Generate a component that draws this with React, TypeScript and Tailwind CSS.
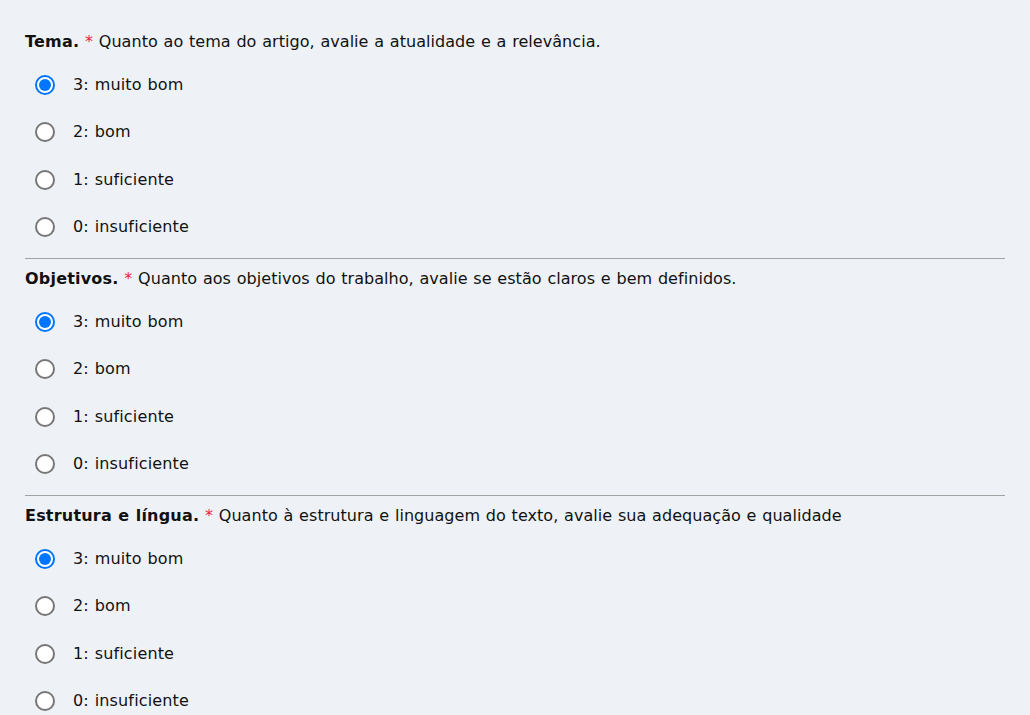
import React from "react";

const options = ["3: muito bom", "2: bom", "1: suficiente", "0: insuficiente"];

const sections = [
  { title: "Tema.", text: "Quanto ao tema do artigo, avalie a atualidade e a relevância." },
  { title: "Objetivos.", text: "Quanto aos objetivos do trabalho, avalie se estão claros e bem definidos." },
  { title: "Estrutura e língua.", text: "Quanto à estrutura e linguagem do texto, avalie sua adequação e qualidade" },
];

function Radio({ checked }: { checked: boolean }) {
  if (checked) {
    return (
      <span className="ml-[10px] flex h-[20px] w-[20px] shrink-0 items-center justify-center rounded-full border-[2px] border-[#0075ff] bg-white">
        <span className="h-[12px] w-[12px] rounded-full bg-[#0075ff]" />
      </span>
    );
  }
  return (
    <span className="ml-[10px] block h-[20px] w-[20px] shrink-0 rounded-full border-[2px] border-[#777777] bg-white" />
  );
}

export default function App() {
  return (
    <div
      className="min-h-[715px] w-[1030px] overflow-hidden bg-[#eef1f6] pl-[25px] pr-[25px] pt-[32px] text-[16px] tracking-[0.05px] [word-spacing:0.6px] text-[#111]"
      style={{ fontFamily: '"DejaVu Sans", Verdana, sans-serif' }}
    >
      {sections.map((s, i) => (
        <div key={i}>
          {i > 0 && <div className="mb-[10px] mt-[7.33px] h-px bg-[#a3a3a3]" />}
          <div className="h-[20px] leading-[20px] whitespace-nowrap">
            <span className="font-bold tracking-[0.2px]">{s.title}</span>{" "}
            <span className="text-[#e8283c]">*</span> {s.text}
          </div>
          <div className="mt-[9.33px]">
            {options.map((o, j) => (
              <label key={j} className="flex h-[47.33px] items-center">
                <Radio checked={j === 0} />
                <span className="ml-[18px] tracking-[0.15px]">{o}</span>
              </label>
            ))}
          </div>
        </div>
      ))}
    </div>
  );
}
